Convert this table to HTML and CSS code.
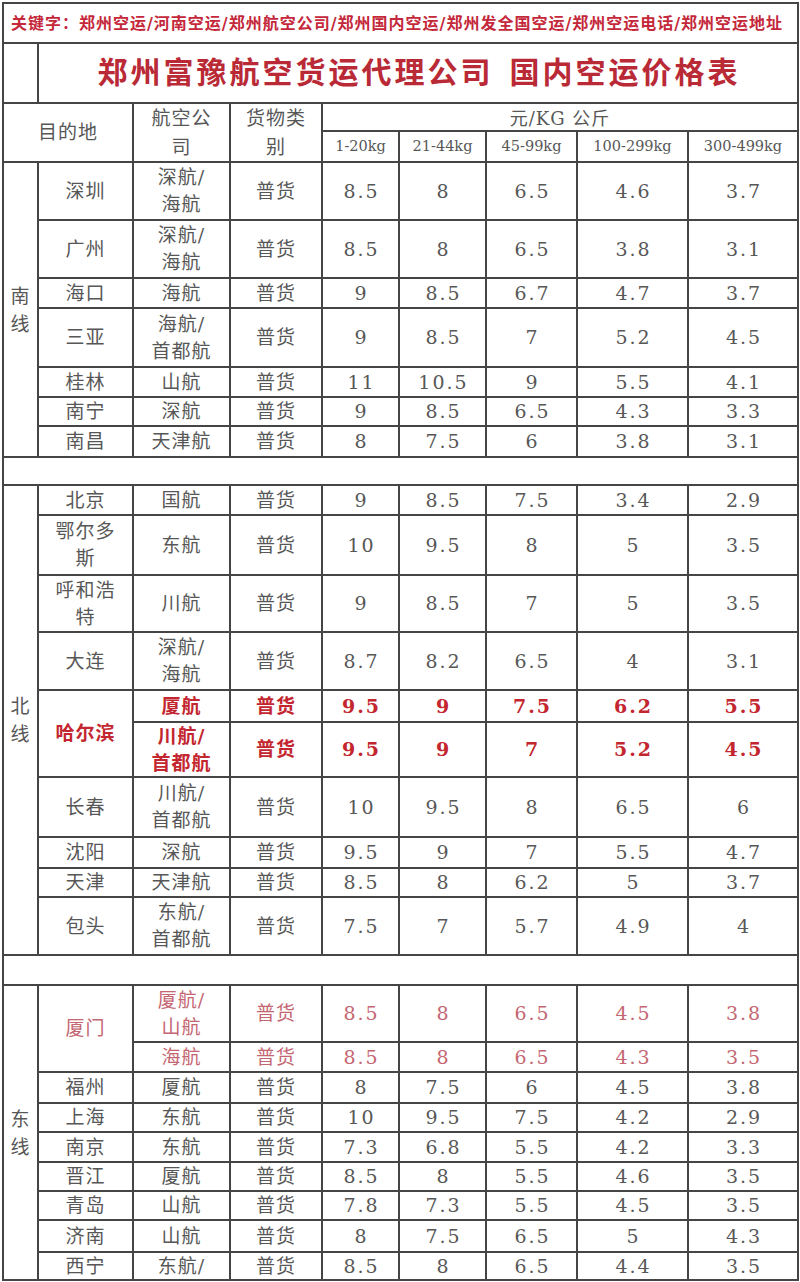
FILE: index.html
```html
<!DOCTYPE html>
<html lang="zh-CN">
<head>
<meta charset="utf-8">
<title>郑州富豫航空货运代理公司 国内空运价格表</title>
<link rel="stylesheet" href="styles.css">
</head>
<body>
<div class="sheet">
  <div class="cell all kw">关键字：郑州空运/河南空运/郑州航空公司/郑州国内空运/郑州发全国空运/郑州空运电话/郑州空运地址</div>

  <div class="cell"></div>
  <div class="cell span8 title">郑州富豫航空货运代理公司<span class="sp"></span>国内空运价格表</div>

  <div class="cell span2 r2 hd">目的地</div>
  <div class="cell r2 hd">航空公<br>司</div>
  <div class="cell r2 hd">货物类<br>别</div>
  <div class="cell span5 unit">元/KG 公斤</div>
  <div class="cell sz">1-20kg</div>
  <div class="cell sz">21-44kg</div>
  <div class="cell sz">45-99kg</div>
  <div class="cell sz">100-299kg</div>
  <div class="cell sz">300-499kg</div>

  <!-- 南线 -->
  <div class="cell r7 region">南<br>线</div>
  <div class="cell">深圳</div><div class="cell">深航/<br>海航</div><div class="cell">普货</div>
  <div class="cell num">8.5</div><div class="cell num">8</div><div class="cell num">6.5</div><div class="cell num">4.6</div><div class="cell num">3.7</div>
  <div class="cell">广州</div><div class="cell">深航/<br>海航</div><div class="cell">普货</div>
  <div class="cell num">8.5</div><div class="cell num">8</div><div class="cell num">6.5</div><div class="cell num">3.8</div><div class="cell num">3.1</div>
  <div class="cell">海口</div><div class="cell">海航</div><div class="cell">普货</div>
  <div class="cell num">9</div><div class="cell num">8.5</div><div class="cell num">6.7</div><div class="cell num">4.7</div><div class="cell num">3.7</div>
  <div class="cell">三亚</div><div class="cell">海航/<br>首都航</div><div class="cell">普货</div>
  <div class="cell num">9</div><div class="cell num">8.5</div><div class="cell num">7</div><div class="cell num">5.2</div><div class="cell num">4.5</div>
  <div class="cell">桂林</div><div class="cell">山航</div><div class="cell">普货</div>
  <div class="cell num">11</div><div class="cell num">10.5</div><div class="cell num">9</div><div class="cell num">5.5</div><div class="cell num">4.1</div>
  <div class="cell">南宁</div><div class="cell">深航</div><div class="cell">普货</div>
  <div class="cell num">9</div><div class="cell num">8.5</div><div class="cell num">6.5</div><div class="cell num">4.3</div><div class="cell num">3.3</div>
  <div class="cell">南昌</div><div class="cell">天津航</div><div class="cell">普货</div>
  <div class="cell num">8</div><div class="cell num">7.5</div><div class="cell num">6</div><div class="cell num">3.8</div><div class="cell num">3.1</div>

  <div class="cell all"></div>

  <!-- 北线 -->
  <div class="cell r10 region">北<br>线</div>
  <div class="cell">北京</div><div class="cell">国航</div><div class="cell">普货</div>
  <div class="cell num">9</div><div class="cell num">8.5</div><div class="cell num">7.5</div><div class="cell num">3.4</div><div class="cell num">2.9</div>
  <div class="cell">鄂尔多<br>斯</div><div class="cell">东航</div><div class="cell">普货</div>
  <div class="cell num">10</div><div class="cell num">9.5</div><div class="cell num">8</div><div class="cell num">5</div><div class="cell num">3.5</div>
  <div class="cell">呼和浩<br>特</div><div class="cell">川航</div><div class="cell">普货</div>
  <div class="cell num">9</div><div class="cell num">8.5</div><div class="cell num">7</div><div class="cell num">5</div><div class="cell num">3.5</div>
  <div class="cell">大连</div><div class="cell">深航/<br>海航</div><div class="cell">普货</div>
  <div class="cell num">8.7</div><div class="cell num">8.2</div><div class="cell num">6.5</div><div class="cell num">4</div><div class="cell num">3.1</div>
  <div class="cell r2 hl">哈尔滨</div><div class="cell hl">厦航</div><div class="cell hl">普货</div>
  <div class="cell num hl">9.5</div><div class="cell num hl">9</div><div class="cell num hl">7.5</div><div class="cell num hl">6.2</div><div class="cell num hl">5.5</div>
  <div class="cell hl">川航/<br>首都航</div><div class="cell hl">普货</div>
  <div class="cell num hl">9.5</div><div class="cell num hl">9</div><div class="cell num hl">7</div><div class="cell num hl">5.2</div><div class="cell num hl">4.5</div>
  <div class="cell">长春</div><div class="cell">川航/<br>首都航</div><div class="cell">普货</div>
  <div class="cell num">10</div><div class="cell num">9.5</div><div class="cell num">8</div><div class="cell num">6.5</div><div class="cell num">6</div>
  <div class="cell">沈阳</div><div class="cell">深航</div><div class="cell">普货</div>
  <div class="cell num">9.5</div><div class="cell num">9</div><div class="cell num">7</div><div class="cell num">5.5</div><div class="cell num">4.7</div>
  <div class="cell">天津</div><div class="cell">天津航</div><div class="cell">普货</div>
  <div class="cell num">8.5</div><div class="cell num">8</div><div class="cell num">6.2</div><div class="cell num">5</div><div class="cell num">3.7</div>
  <div class="cell">包头</div><div class="cell">东航/<br>首都航</div><div class="cell">普货</div>
  <div class="cell num">7.5</div><div class="cell num">7</div><div class="cell num">5.7</div><div class="cell num">4.9</div><div class="cell num">4</div>

  <div class="cell all"></div>

  <!-- 东线 -->
  <div class="cell r9 region">东<br>线</div>
  <div class="cell r2 pk">厦门</div><div class="cell pk">厦航/<br>山航</div><div class="cell pk">普货</div>
  <div class="cell num pk">8.5</div><div class="cell num pk">8</div><div class="cell num pk">6.5</div><div class="cell num pk">4.5</div><div class="cell num pk">3.8</div>
  <div class="cell pk">海航</div><div class="cell pk">普货</div>
  <div class="cell num pk">8.5</div><div class="cell num pk">8</div><div class="cell num pk">6.5</div><div class="cell num pk">4.3</div><div class="cell num pk">3.5</div>
  <div class="cell">福州</div><div class="cell">厦航</div><div class="cell">普货</div>
  <div class="cell num">8</div><div class="cell num">7.5</div><div class="cell num">6</div><div class="cell num">4.5</div><div class="cell num">3.8</div>
  <div class="cell">上海</div><div class="cell">东航</div><div class="cell">普货</div>
  <div class="cell num">10</div><div class="cell num">9.5</div><div class="cell num">7.5</div><div class="cell num">4.2</div><div class="cell num">2.9</div>
  <div class="cell">南京</div><div class="cell">东航</div><div class="cell">普货</div>
  <div class="cell num">7.3</div><div class="cell num">6.8</div><div class="cell num">5.5</div><div class="cell num">4.2</div><div class="cell num">3.3</div>
  <div class="cell">晋江</div><div class="cell">厦航</div><div class="cell">普货</div>
  <div class="cell num">8.5</div><div class="cell num">8</div><div class="cell num">5.5</div><div class="cell num">4.6</div><div class="cell num">3.5</div>
  <div class="cell">青岛</div><div class="cell">山航</div><div class="cell">普货</div>
  <div class="cell num">7.8</div><div class="cell num">7.3</div><div class="cell num">5.5</div><div class="cell num">4.5</div><div class="cell num">3.5</div>
  <div class="cell">济南</div><div class="cell">山航</div><div class="cell">普货</div>
  <div class="cell num">8</div><div class="cell num">7.5</div><div class="cell num">6.5</div><div class="cell num">5</div><div class="cell num">4.3</div>
  <div class="cell">西宁</div><div class="cell">东航/</div><div class="cell">普货</div>
  <div class="cell num">8.5</div><div class="cell num">8</div><div class="cell num">6.5</div><div class="cell num">4.4</div><div class="cell num">3.5</div>
</div>
</body>
</html>
```

FILE: styles.css
```css
html, body {
  margin: 0;
  padding: 0;
  background: #ffffff;
}

body {
  padding: 2px 0 0 2px;
  font-family: "DejaVu Serif", "Noto Sans CJK SC", serif;
  color: #575757;
}

.sheet {
  display: grid;
  width: 797px;
  box-sizing: border-box;
  padding: 2px;
  gap: 2px;
  background: #454545;
  grid-template-columns: 33px 93px 95px 90px 75px 85px 89px 109px 108px;
  grid-template-rows:
    38px 58px 26px 29px
    56px 56px 28px 57px 28px 27px 29px
    26px
    28px 58px 55px 56px 30px 53px 58px 29px 27px 56px
    28px
    55px 28px 29px 27px 28px 27px 27px 30px 26px;
}

.cell {
  background: #ffffff;
  display: flex;
  align-items: center;
  justify-content: center;
  text-align: center;
  font-size: 19px;
  line-height: 27px;
  letter-spacing: 1px;
  font-weight: 400;
  overflow: hidden;
  white-space: nowrap;
}

.all { grid-column: 1 / -1; }
.span8 { grid-column: span 8; }
.span5 { grid-column: span 5; }
.span2 { grid-column: span 2; }
.r2 { grid-row: span 2; }
.r7 { grid-row: span 7; }
.r9 { grid-row: span 9; }
.r10 { grid-row: span 10; }

.kw {
  justify-content: flex-start;
  padding-left: 7px;
  font-size: 16px;
  letter-spacing: 1px;
  font-weight: 700;
  color: #c4283a;
}

.title {
  font-size: 30px;
  line-height: 36px;
  letter-spacing: 3px;
  font-weight: 700;
  color: #b92a36;
  padding-left: 2px;
}

.title .sp {
  display: inline-block;
  width: 16px;
}

.hd {
  line-height: 29px;
}

.unit {
  font-size: 18px;
  letter-spacing: 1px;
  padding-top: 2px;
}

.sz {
  font-size: 14.5px;
  letter-spacing: 0;
}

.region {
  line-height: 28px;
}

.num {
  font-size: 19px;
  letter-spacing: 2px;
  padding-left: 2px;
}

.hl {
  color: #c3262f;
  font-weight: 700;
}

.pk {
  color: #c46672;
}
```
